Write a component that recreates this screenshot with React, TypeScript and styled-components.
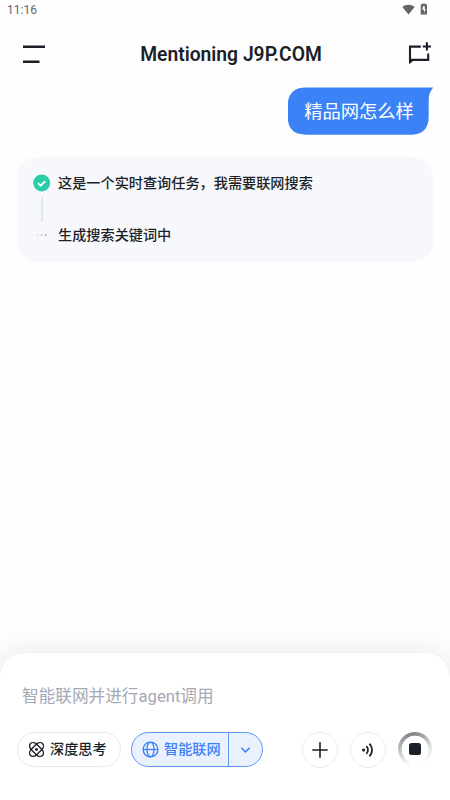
import React from 'react';
import styled, { createGlobalStyle } from 'styled-components';

const GlobalStyle = createGlobalStyle`
  * { box-sizing: border-box; }
  body { margin: 0; background: #fefefe; }
  button { font: inherit; color: inherit; background: none; border: 0; padding: 0; margin: 0; }
  svg { display: block; flex: none; }
`;

const Screen = styled.div`
  width: 450px;
  height: 800px;
  display: flex;
  flex-direction: column;
  overflow: hidden;
  background: #fefefe;
  color: #1b1f28;
  font-family: Roboto, 'Noto Sans CJK SC', sans-serif;
`;

const StatusBar = styled.div`
  height: 20px;
  padding: 0 22px 0 7px;
  display: flex;
  align-items: center;
  justify-content: space-between;
  color: #666;
  font-size: 12px;
`;

const StatusIcons = styled.div`
  display: flex;
  gap: 5px;
  align-items: center;
  margin-top: -2px;
`;

const Header = styled.header`
  height: 67px;
  padding: 0 18px 0 23px;
  display: flex;
  align-items: center;
  justify-content: space-between;
`;

const Title = styled.h1`
  margin: 2px 0 0 9px;
  font-size: 19.3px;
  font-weight: 600;
  line-height: 24px;
  white-space: nowrap;
`;

const Messages = styled.main`
  flex: 1;
  display: flex;
  flex-direction: column;
  padding: 0 17px;
`;

const Bubble = styled.div`
  position: relative;
  align-self: flex-end;
  width: 141px;
  height: 48px;
  margin: 0 4px 0 0;
  padding: 2px 0 0 1px;
  display: flex;
  align-items: center;
  justify-content: center;
  color: #fff;
  font-size: 18.3px;
  line-height: 24px;
  white-space: nowrap;
`;

const BubbleShape = styled.svg`
  position: absolute;
  left: 0;
  top: 0;
`;

const BubbleText = styled.span`
  position: relative;
`;

const TaskCard = styled.section`
  height: 105px;
  margin-top: 22px;
  padding: 16px;
  border-radius: 20px;
  background: #f7f8fb;
`;

const TaskRow = styled.div`
  display: flex;
  align-items: center;
  gap: 7px;
  height: 21px;
  font-size: 14.17px;
  font-weight: 500;
  white-space: nowrap;
`;

const TaskLabel = styled.span`
  margin-top: -3px;
`;

const Marker = styled.span`
  width: 18px;
  display: flex;
  justify-content: center;
  margin-top: -1px;
`;

const Connector = styled.div`
  width: 2px;
  height: 25px;
  margin: 3px 0 3px 8px;
  border-radius: 1px;
  background: #e1e5ef;
`;

const Composer = styled.footer`
  height: 147px;
  padding: 32px 17px 0;
  border-radius: 24px 24px 0 0;
  background: #fff;
  box-shadow: 0 0 30px rgba(20, 30, 25, 0.1), 0 0 1px rgba(60, 70, 100, 0.12);
`;

const Placeholder = styled.div`
  padding-left: 5px;
  height: 24px;
  line-height: 24px;
  font-size: 16.65px;
  color: #a5a9b5;
  white-space: nowrap;
`;

const Toolbar = styled.div`
  display: flex;
  align-items: center;
  height: 36px;
  margin-top: 22.5px;
`;

const Chip = styled.button<{ $active?: boolean }>`
  height: 35px;
  width: ${(p) => (p.$active ? 132 : 104)}px;
  margin-right: ${(p) => (p.$active ? 39.4 : 10)}px;
  display: flex;
  align-items: center;
  border: 1px solid ${(p) => (p.$active ? '#5b98f8' : '#e8eaf2')};
  border-radius: 18px;
  background: ${(p) => (p.$active ? '#eaf1fe' : '#fff')};
  color: ${(p) => (p.$active ? '#3b82f6' : '#1b1f28')};
  font-size: 14.17px;
  font-weight: 500;
  white-space: nowrap;
  padding-left: 10px;
`;

const ChipLabel = styled.span`
  margin-left: 5px;
  line-height: 21px;
`;

const ChipMenu = styled.span`
  align-self: stretch;
  display: flex;
  align-items: center;
  margin-left: 7px;
  padding-left: 11px;
  border-left: 1px solid #5b98f8;
`;

const RoundButton = styled.button`
  width: 36px;
  height: 36px;
  margin-right: 11.6px;
  border: 1px solid #ebecf3;
  border-radius: 50%;
  display: flex;
  align-items: center;
  justify-content: center;
`;

const StopButton = styled.button`
  width: 34px;
  height: 34px;
  margin-top: -1px;
  border-radius: 50%;
  display: flex;
  align-items: center;
  justify-content: center;
  background:
    radial-gradient(circle, #fff 13px, transparent 13.7px),
    conic-gradient(#84868e 0deg, #a6a7ad 35deg, #dcdde0 75deg, #f2f2f4 110deg, #fff 160deg, #fff 195deg, #e5e5e8 230deg, #b9babf 275deg, #898b92 330deg, #84868e 360deg);
`;

const StopSquare = styled.span`
  width: 12px;
  height: 12px;
  border-radius: 2.5px;
  background: #1b1f28;
`;

const WifiIcon = () => (
  <svg width="13" height="11" viewBox="0 0 13 11">
    <path d="M.3 3C4 .1 9 .1 12.7 3L6.5 10.6Z" fill="#666" />
  </svg>
);

const BatteryIcon = () => (
  <svg width="8" height="12" viewBox="0 0 8 12">
    <path d="M2.3 1.3V.4h3v.9H7v10.2H.7V1.3Z" fill="#666" />
    <path d="M3.2 3.1h1.5v3h1.1L4 9.7V6.8H2.3Z" fill="#fff" />
  </svg>
);

const MenuIcon = () => (
  <svg width="22" height="20" viewBox="0 0 22 20" fill="none" stroke="#1b1f28" strokeWidth="2.6">
    <path d="M0 2.8h22M0 17.7h16.5" />
  </svg>
);

const NewChatIcon = () => (
  <svg width="24" height="24" viewBox="0 0 24 24" fill="none" stroke="#1b1f28" strokeWidth="2.1">
    <path d="M12.8 4.6H2v13.3h18.2V11.6" />
    <path d="M1 17h6l-4 3.7-2 1.3Z" fill="#1b1f28" stroke="none" />
    <path d="M18.9.3v8.3M14.7 4.5h8.3" />
  </svg>
);

const CheckIcon = () => (
  <svg width="18" height="18" viewBox="0 0 18 18">
    <circle cx="8.7" cy="9" r="8.5" fill="#29cda7" />
    <path d="m4.9 9.2 2.7 2.5 4.7-4.5" fill="none" stroke="#fff" strokeWidth="1.8" />
  </svg>
);

const PendingIcon = () => (
  <svg width="18" height="6" viewBox="0 0 18 6">
    <circle cx="4.5" cy="3" r="1.2" fill="#e6e7e9" />
    <circle cx="8.7" cy="3" r="1.2" fill="#d9dadd" />
    <circle cx="12.8" cy="3" r="1.3" fill="#c6c7cb" />
  </svg>
);

const AtomIcon = () => (
  <svg width="17" height="17" viewBox="0 0 17 17" fill="none" stroke="#1b1f28" strokeWidth="1.4">
    <rect x="0" y="4.7" width="17" height="7.6" rx="5" ry="3.8" transform="rotate(45 8.5 8.5)" />
    <rect x="0" y="4.7" width="17" height="7.6" rx="5" ry="3.8" transform="rotate(-45 8.5 8.5)" />
    <circle cx="8.5" cy="8.5" r="1.4" fill="#1b1f28" stroke="none" />
  </svg>
);

const GlobeIcon = () => (
  <svg width="17" height="17" viewBox="0 0 17 17" fill="none" stroke="currentColor" strokeWidth="1.3">
    <circle cx="8.5" cy="8.5" r="7.4" />
    <ellipse cx="8.5" cy="8.5" rx="3.5" ry="7.4" />
    <path d="M1 8.5h15" />
  </svg>
);

const ChevronIcon = () => (
  <svg width="11" height="8" viewBox="0 0 11 8" fill="none" stroke="currentColor" strokeWidth="1.6">
    <path d="m1.3 1.7 4.2 4.1 4.2-4.1" />
  </svg>
);

const PlusIcon = () => (
  <svg width="16" height="16" viewBox="0 0 16 16" fill="none" stroke="#1b1f28" strokeWidth="1.6" strokeLinecap="round">
    <path d="M8 .8v14.4M.8 8h14.4" />
  </svg>
);

const VoiceIcon = () => (
  <svg width="14" height="16" viewBox="0 0 14 16" fill="none" stroke="#1b1f28" strokeWidth="1.8">
    <circle cx="2.6" cy="8" r="1.6" fill="#1b1f28" stroke="none" />
    <path d="M5.4 4.2c2.1 2 2.1 5.6 0 7.6M8.4 1.6c3.5 3.5 3.5 9.3 0 12.8" />
  </svg>
);

export default function App() {
  return (
    <Screen>
      <GlobalStyle />
      <StatusBar>
        <span>11:16</span>
        <StatusIcons>
          <WifiIcon />
          <BatteryIcon />
        </StatusIcons>
      </StatusBar>
      <Header>
        <button aria-label="菜单"><MenuIcon /></button>
        <Title>Mentioning J9P.COM</Title>
        <button aria-label="新对话"><NewChatIcon /></button>
      </Header>
      <Messages>
        <Bubble>
          <BubbleShape width="146" height="48" viewBox="0 0 146 48">
            <path d="M18 .4H145.2C142 4.5 140.7 8 140.7 13V29.5Q140.7 47.7 122.5 47.7H18Q-.3 47.7-.3 29.5V18.6Q-.3.4 18 .4Z" fill="#3b82f6" />
          </BubbleShape>
          <BubbleText>精品网怎么样</BubbleText>
        </Bubble>
        <TaskCard>
          <TaskRow>
            <Marker><CheckIcon /></Marker>
            <TaskLabel>这是一个实时查询任务，我需要联网搜索</TaskLabel>
          </TaskRow>
          <Connector />
          <TaskRow>
            <Marker><PendingIcon /></Marker>
            <TaskLabel>生成搜索关键词中</TaskLabel>
          </TaskRow>
        </TaskCard>
      </Messages>
      <Composer>
        <Placeholder>智能联网并进行agent调用</Placeholder>
        <Toolbar>
          <Chip>
            <AtomIcon />
            <ChipLabel>深度思考</ChipLabel>
          </Chip>
          <Chip $active>
            <GlobeIcon />
            <ChipLabel>智能联网</ChipLabel>
            <ChipMenu><ChevronIcon /></ChipMenu>
          </Chip>
          <RoundButton aria-label="添加"><PlusIcon /></RoundButton>
          <RoundButton aria-label="语音"><VoiceIcon /></RoundButton>
          <StopButton aria-label="停止"><StopSquare /></StopButton>
        </Toolbar>
      </Composer>
    </Screen>
  );
}
